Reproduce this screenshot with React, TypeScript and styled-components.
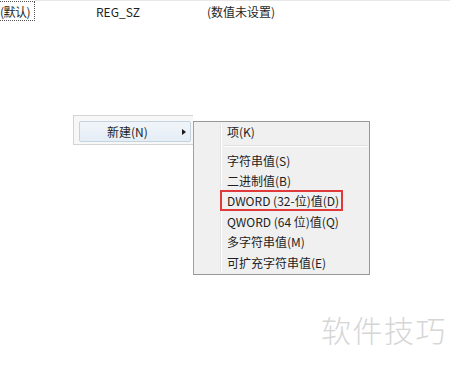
import React from "react";
import styled, { createGlobalStyle } from "styled-components";

const GlobalStyle = createGlobalStyle`
  html, body {
    margin: 0;
    padding: 0;
    background: #ffffff;
  }
  body {
    font-family: "Noto Sans CJK SC", "Noto Sans", sans-serif;
    font-size: 12px;
    color: #1e1e1e;
  }
`;

const Page = styled.div`
  position: relative;
  width: 450px;
  height: 367px;
  overflow: hidden;
  background: #fff;
`;

const ValueRow = styled.div`
  display: grid;
  grid-template-columns: 96px 111px 1fr;
  align-items: center;
  height: 22px;
`;

const NameCell = styled.div`
  display: flex;
  align-items: center;
  height: 20px;
  width: 35px;
  margin-top: 1px;
  border: 1px dotted #555;
  border-left: none;
  box-sizing: border-box;
  letter-spacing: -0.5px;
`;

const Cell = styled.div`
  white-space: nowrap;
  height: 22px;
  line-height: 21px;
  border-top: 1px solid #e8e8e8;
  box-sizing: border-box;
`;

const NameCol = styled.div`
  display: flex;
  height: 22px;
  & > span {
    flex: 1;
    border-top: 1px solid #e8e8e8;
  }
`;

const Menu = styled.div`
  position: absolute;
  left: 73px;
  top: 115px;
  width: 120px;
  height: 30px;
  box-sizing: border-box;
  padding: 5px 2px 2px 5px;
  background: #f7f7f7;
  border: 1px solid #d4d4d4;
  border-right: none;
`;

const HotItem = styled.div`
  display: flex;
  align-items: center;
  height: 21px;
  box-sizing: border-box;
  padding-left: 27px;
  padding-right: 4px;
  border: 1px solid #c4d3e0;
  border-radius: 2px;
  background: linear-gradient(#f1f5fa, #e5edf5);
`;

const ItemLabel = styled.span`
  flex: 1;
  white-space: nowrap;
`;

const Arrow = styled.span`
  width: 0;
  height: 0;
  border-top: 3.5px solid transparent;
  border-bottom: 3.5px solid transparent;
  border-left: 4px solid #1a1a1a;
`;

const SubMenu = styled.div`
  position: absolute;
  left: 193px;
  top: 121px;
  width: 177px;
  box-sizing: border-box;
  padding: 0 2px 2px 2px;
  background: #f0f0f0;
  border: 1px solid #979797;
  border-left-color: #a0a0a0;
  display: flex;
  flex-direction: column;
`;

const Gutter = styled.div`
  position: absolute;
  left: 26px;
  top: 2px;
  bottom: 2px;
  width: 1px;
  background: #e2e3e3;
  border-right: 1px solid #ffffff;
`;

const SubItem = styled.div<{ $boxed?: boolean }>`
  position: relative;
  display: flex;
  align-items: center;
  height: 20.4px;
  padding-left: 31px;
  white-space: nowrap;
  ${(p) =>
    p.$boxed &&
    `
    &::after {
      content: "";
      position: absolute;
      left: 24px;
      top: -1px;
      width: 123px;
      height: 21px;
      border: 2px solid #e0393c;
      box-sizing: border-box;
    }
  `}
`;

const FirstItem = styled(SubItem)`
  height: 19px;
`;

const Separator = styled.div`
  height: 1px;
  margin: 4px 0 3px 28px;
  background: #e0e0e0;
  border-bottom: 1px solid #ffffff;
`;

const Watermark = styled.div`
  position: absolute;
  left: 321px;
  top: 307px;
  font-size: 30px;
  color: #d6d6d6;
  letter-spacing: 1.5px;
  font-family: "Noto Sans CJK SC", sans-serif;
  font-weight: 300;
`;

const subItems = [
  { label: "字符串值(S)" },
  { label: "二进制值(B)" },
  { label: "DWORD (32-位)值(D)", boxed: true },
  { label: "QWORD (64 位)值(Q)" },
  { label: "多字符串值(M)" },
  { label: "可扩充字符串值(E)" },
];

export default function App() {
  return (
    <Page>
      <GlobalStyle />
      <ValueRow>
        <NameCol>
          <NameCell>(默认)</NameCell>
          <span />
        </NameCol>
        <Cell>REG_SZ</Cell>
        <Cell>(数值未设置)</Cell>
      </ValueRow>

      <Menu>
        <HotItem>
          <ItemLabel>新建(N)</ItemLabel>
          <Arrow />
        </HotItem>
      </Menu>

      <SubMenu>
        <Gutter />
        <FirstItem>项(K)</FirstItem>
        <Separator />
        {subItems.map((it) => (
          <SubItem key={it.label} $boxed={it.boxed}>
            {it.label}
          </SubItem>
        ))}
      </SubMenu>

      <Watermark>软件技巧</Watermark>
    </Page>
  );
}
